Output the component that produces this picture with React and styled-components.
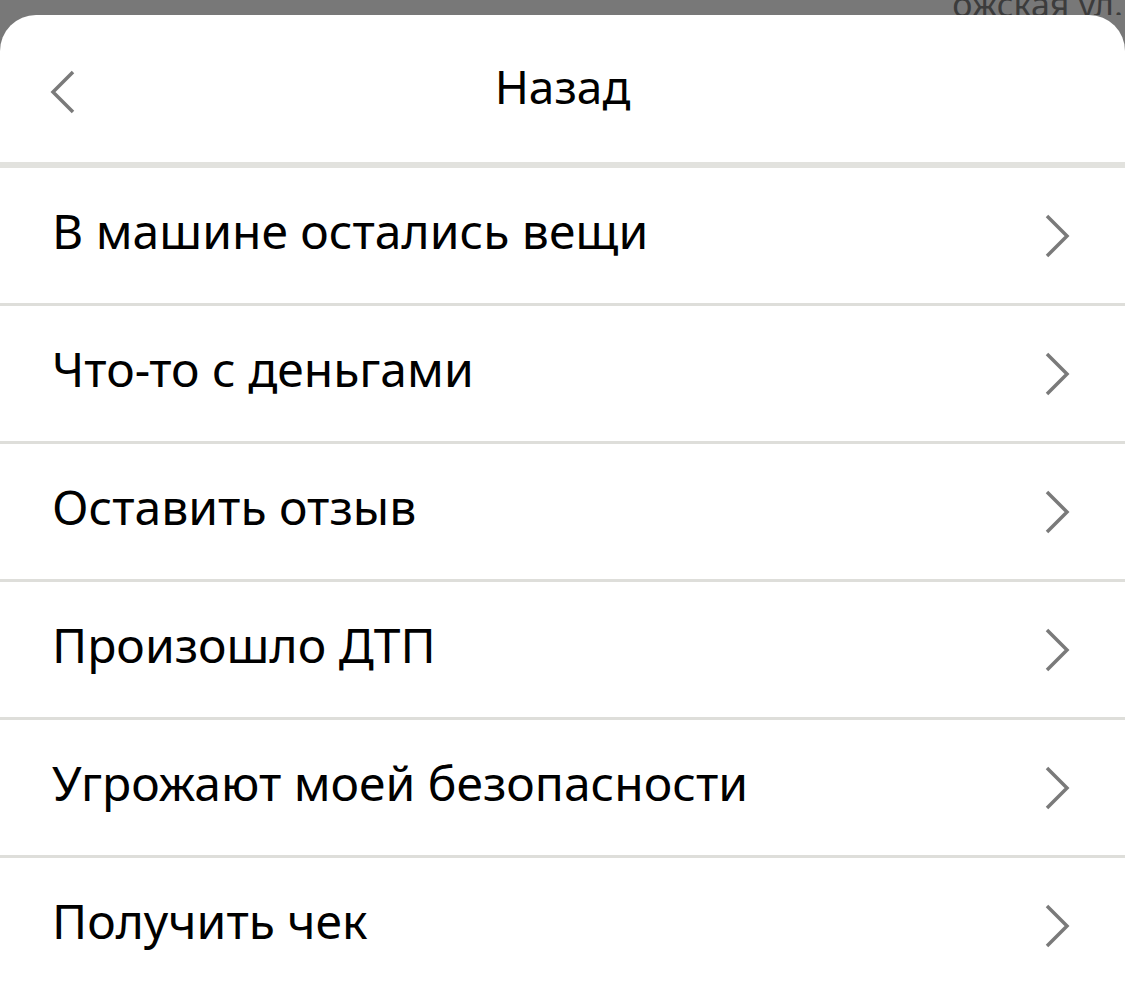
import styled, { createGlobalStyle } from 'styled-components';

const GlobalStyle = createGlobalStyle`
  html, body {
    margin: 0;
    padding: 0;
    background: #787878;
    font-family: 'Noto Sans', 'Open Sans', sans-serif;
  }
`;

const Page = styled.div`
  width: 1125px;
  height: 1008px;
  overflow: hidden;
  display: flex;
  flex-direction: column;
`;

const Backdrop = styled.div`
  height: 15px;
  overflow: hidden;
  display: flex;
  justify-content: flex-end;
`;

const BackdropText = styled.span`
  margin-top: -13px;
  margin-right: 2px;
  font-size: 34px;
  line-height: 34px;
  color: #3c3c3c;
  white-space: nowrap;
`;

const Sheet = styled.div`
  flex: 1;
  background: #fff;
  border-radius: 36px 36px 0 0;
  display: flex;
  flex-direction: column;
`;

const Header = styled.div`
  height: 147px;
  display: flex;
  align-items: center;
  justify-content: center;
  position: relative;
  border-bottom: 6px solid #e2e2de;
`;

const BackButton = styled.button`
  position: absolute;
  left: 48px;
  top: 54px;
  padding: 0;
  border: none;
  background: none;
  display: flex;
`;

const Title = styled.h1`
  margin: 0 0 6px;
  font-size: 46px;
  font-weight: 400;
  color: #000;
`;

const Row = styled.div`
  height: 135px;
  padding: 0 53px 0 52px;
  display: flex;
  align-items: center;
  justify-content: space-between;
  border-bottom: ${({ $last }) => ($last ? 'none' : '3px solid #dededa')};
`;

const Label = styled.span`
  margin-bottom: 10px;
  font-size: 48px;
  color: #000;
`;

const Chevron = ({ dir }) => (
  <svg width="28" height="46" viewBox="0 0 28 46">
    <path
      d={dir === 'left' ? 'M25 3 L5 23 L25 43' : 'M3 3 L23 23 L3 43'}
      fill="none"
      stroke="#7a7a7a"
      strokeWidth="3.5"
    />
  </svg>
);

const items = [
  'В машине остались вещи',
  'Что-то с деньгами',
  'Оставить отзыв',
  'Произошло ДТП',
  'Угрожают моей безопасности',
  'Получить чек',
];

export default function App() {
  return (
    <Page>
      <GlobalStyle />
      <Backdrop>
        <BackdropText>ожская ул.</BackdropText>
      </Backdrop>
      <Sheet>
        <Header>
          <BackButton>
            <Chevron dir="left" />
          </BackButton>
          <Title>Назад</Title>
        </Header>
        {items.map((item, i) => (
          <Row key={item} $last={i === items.length - 1}>
            <Label>{item}</Label>
            <Chevron dir="right" />
          </Row>
        ))}
      </Sheet>
    </Page>
  );
}
